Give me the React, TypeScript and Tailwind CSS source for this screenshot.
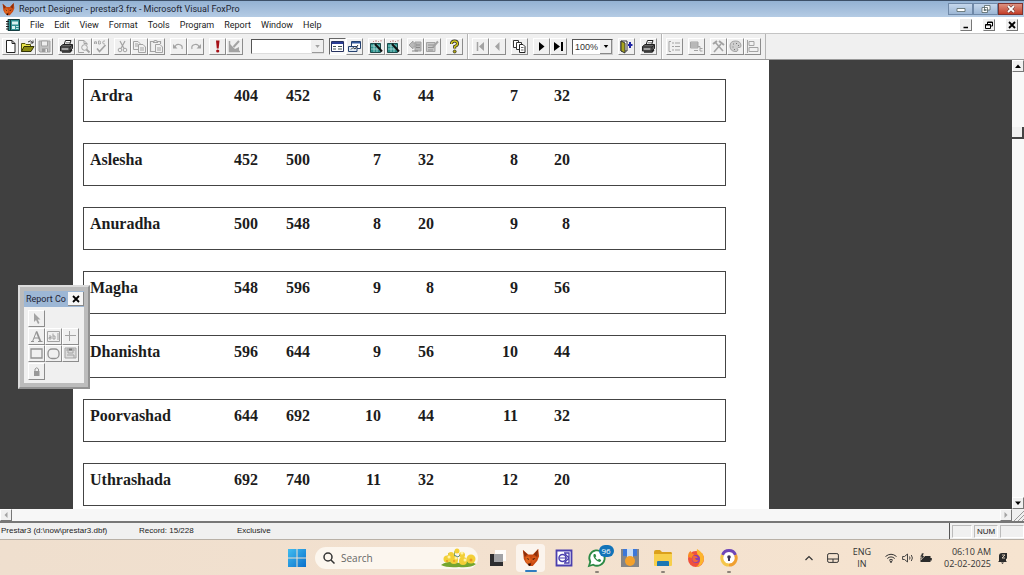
import type { ReactNode } from "react";

interface Star {
  name: string;
  values: number[];
}

interface ToolProps {
  label: string;
  children: ReactNode;
  pressed?: boolean;
}

const stars: Star[] = [
  { name: "Ardra", values: [404, 452, 6, 44, 7, 32] },
  { name: "Aslesha", values: [452, 500, 7, 32, 8, 20] },
  { name: "Anuradha", values: [500, 548, 8, 20, 9, 8] },
  { name: "Magha", values: [548, 596, 9, 8, 9, 56] },
  { name: "Dhanishta", values: [596, 644, 9, 56, 10, 44] },
  { name: "Poorvashad", values: [644, 692, 10, 44, 11, 32] },
  { name: "Uthrashada", values: [692, 740, 11, 32, 12, 20] },
];

const menus = ["File", "Edit", "View", "Format", "Tools", "Program", "Report", "Window", "Help"];

const GRAY = "#a3a3a3";

function Icon({ children }: { children: ReactNode }) {
  return (
    <svg viewBox="0 0 15 15" className="size-[15px]" fill="none" aria-hidden="true">
      {children}
    </svg>
  );
}

function Tool({ label, children, pressed }: ToolProps) {
  return (
    <button
      aria-label={label}
      className={
        pressed
          ? "size-[17px] border border-t-[#666] border-l-[#666] border-r-white border-b-white bg-[#f8f8f8]"
          : "size-[17px] border border-t-white border-l-white border-r-[#8c8c8c] border-b-[#8c8c8c] bg-[#f0f0f0]"
      }
    >
      <Icon>{children}</Icon>
    </button>
  );
}

function Group({ children }: { children: ReactNode }) {
  return <div className="flex">{children}</div>;
}

function FoxHead({ className }: { className: string }) {
  return (
    <svg viewBox="0 0 20 20" className={className} aria-hidden="true">
      <path d="M1 1 L7 6 L12 6 L18 0 L19 8 L17 13 L12 19 L8 19 L4 15 L2 11 Z" fill="#c94a12" />
      <path d="M1 1 L6 6 L3 9 Z M18 0 L13 6 L17 9 Z" fill="#8a300d" />
      <path d="M4 9 L8 8 L10 12 L8 18 L4 14 Z" fill="#e0661e" />
      <path d="M12 8 L16 9 L15 13 L12 16 L10 12 Z" fill="#d9581a" />
      <path d="M5 10 L8 11 L7 12 Z M11 11 L15 10 L13 12 Z" fill="#2b0d04" />
      <path d="M7 16 L10 16 L9 19 L7 18 Z" fill="#1c0a05" />
    </svg>
  );
}

function Printer() {
  return (
    <>
      <path d="M5 6 L6.500 1.500 H12 L10.500 6" fill="#fff" stroke="#222" />
      <path d="M7 3.500 H11 M6.500 5 H10.500" stroke="#555" strokeWidth=".6" />
      <path d="M1.500 7.500 L4 5.500 H13.500 V9.500 L11 12 H1.500 Z" fill="#666" stroke="#222" />
      <path d="M1.500 8 H11 L13.500 6 M11 8 V12" stroke="#222" />
      <path d="M3 10 H9" stroke="#ddd" />
      <path d="M3 13 H11 L13 11" stroke="#222" strokeWidth="1.300" />
    </>
  );
}

function Wizard() {
  return (
    <>
      <path d="M1.500 4.500 H11.500 V13.500 H1.500 Z" fill="#2b8f8b" stroke="#1d4a4a" />
      <path d="M2 7 H11 M2 10 H11 M5 5 V13 M8 5 V13" stroke="#c9e6e4" strokeWidth=".7" />
      <path d="M6 5 L13 12.500" stroke="#111" strokeWidth="2" />
      <path d="M7 1 V3 M10 2 L9 3 M12 1 V2.500 M4 2 L5 3" stroke="#b77" strokeWidth=".9" />
    </>
  );
}

function StandardToolbar() {
  return (
    <div className="flex items-center gap-[5px] border-r border-[#b5b5b5] pr-1 pl-[2px]">
      <Group>
        <Tool label="New">
          <path d="M3.500 1.500 H9 L12 4.500 V13.500 H3.500 Z" fill="#fff" stroke="#222" />
          <path d="M9 1.500 V4.500 H12" stroke="#222" />
        </Tool>
        <Tool label="Open">
          <path d="M1.500 12.500 V4.500 H5 L6 5.500 H10.500 V7.500" fill="#e9e64c" stroke="#55550a" />
          <path d="M1.500 12.500 L4 7.500 H14 L11 12.500 Z" fill="#8b8b12" stroke="#333307" />
          <path d="M8 3 Q10.500 .5 12.500 3.500 M13 1.500 V4 H10.500" stroke="#222" strokeWidth=".9" />
        </Tool>
        <Tool label="Save">
          <path d="M2 2 H13 V13 H3 L2 12 Z" fill="#c2c2c2" stroke={GRAY} />
          <path d="M4.500 2 H10.500 V7 H4.500 Z" fill="#eee" stroke={GRAY} />
          <path d="M5 9.500 H11 V13 H5 Z" fill="#999" />
          <path d="M8.500 10 H10 V13 H8.500 Z" fill="#eee" />
        </Tool>
      </Group>
      <Group>
        <Tool label="Print"><Printer /></Tool>
        <Tool label="Print Preview">
          <path d="M2.500 1.500 H8 L11 4.500 V6 M2.500 1.500 V13.500 H8 M8 1.500 V4.500 H11" stroke={GRAY} />
          <circle cx="8.500" cy="8.500" r="2.800" stroke={GRAY} />
          <path d="M10.500 10.500 L13.500 13.500" stroke={GRAY} strokeWidth="1.800" />
        </Tool>
        <Tool label="Spelling">
          <path d="M1.500 5 V3 L2.500 2 L3.500 3 V5 M1.500 4 H3.500 M5.500 2 V5 H7 L8 4.200 L7 3.500 L7.500 2.500 L6.500 2 H5.500 M12 2 H10.500 L9.800 3 V4 L10.500 5 H12" stroke={GRAY} strokeWidth=".9" />
          <path d="M4 9.500 L6.500 12.500 L12.500 6" stroke={GRAY} strokeWidth="1.600" />
        </Tool>
      </Group>
      <Group>
        <Tool label="Cut">
          <path d="M5 2 L9 9.500 M10 2 L6 9.500" stroke={GRAY} strokeWidth="1.200" />
          <circle cx="5" cy="11" r="1.800" stroke={GRAY} />
          <circle cx="10" cy="11" r="1.800" stroke={GRAY} />
        </Tool>
        <Tool label="Copy">
          <path d="M1.500 2.500 H6 L8 4.500 V10.500 H1.500 Z M3 5 H6 M3 7 H6" stroke={GRAY} />
          <path d="M6.500 5.500 H11 L13.500 8 V13.500 H6.500 Z" fill="#f0f0f0" stroke={GRAY} />
          <path d="M8 9 H12 M8 11 H12" stroke={GRAY} />
        </Tool>
        <Tool label="Paste">
          <path d="M5 2.500 H1.500 V12.500 H6 M9 2.500 H11.500 V5 M4.500 3.500 V2.500 L6 1.500 H7 L8.500 2.500 V3.500 Z" stroke={GRAY} strokeWidth="1.200" />
          <path d="M6.500 5.500 H11 L13.500 8 V13.500 H6.500 Z" fill="#f0f0f0" stroke={GRAY} />
          <path d="M8 9 H12 M8 11 H12" stroke={GRAY} />
        </Tool>
      </Group>
      <Group>
        <Tool label="Undo">
          <path d="M4 9 Q4 5 8 5.500 Q12 6 11 10" stroke={GRAY} strokeWidth="1.200" />
          <path d="M2 5 V9.500 H6.500 Z" fill={GRAY} />
        </Tool>
        <Tool label="Redo">
          <path d="M11 9 Q11 5 7 5.500 Q3 6 4 10" stroke={GRAY} strokeWidth="1.200" />
          <path d="M13 5 V9.500 H8.500 Z" fill={GRAY} />
        </Tool>
      </Group>
      <Group>
        <Tool label="Run">
          <path d="M6 1.500 H9.500 L8.700 9.500 H6.800 Z" fill="#a50f16" />
          <circle cx="7.700" cy="12" r="1.600" fill="#a50f16" />
        </Tool>
        <Tool label="Modify Form">
          <path d="M2.500 2 V12.500 H13" stroke={GRAY} strokeWidth="1.500" />
          <path d="M3 12 V5 L8 10 L12 8 V12 Z" fill={GRAY} />
          <path d="M6.500 8 L12 2" stroke={GRAY} strokeWidth="2" />
        </Tool>
      </Group>
      <select
        aria-label="Database"
        disabled
        className="ml-[3px] h-[15px] w-[73px] appearance-none border border-t-[#555] border-l-[#555] border-r-[#ddd] border-b-[#ddd] bg-white bg-[linear-gradient(#f0f0f0,#f0f0f0)] bg-[length:12px_13px] bg-right bg-no-repeat"
      />
      <span className="pointer-events-none -ml-[17px] flex h-[13px] w-3 items-center justify-center border-r border-b border-[#999]">
        <svg viewBox="0 0 6 4" className="h-[3px] w-[5px]" aria-hidden="true"><path d="M0 0 H6 L3 4 Z" fill={GRAY} /></svg>
      </span>
      <Group>
        <Tool label="Form" pressed>
          <path d="M1.500 2.500 H13.500 V12.500 H1.500 Z" fill="#fff" stroke="#24305f" />
          <path d="M2 3 H13 V5 H2 Z" fill="#2b3e95" />
          <path d="M3 7.500 H6 M3 10 H6 M8 7.500 H12 M8 10 H12" stroke="#455" />
        </Tool>
        <Tool label="View Window">
          <path d="M4.500 2.500 H13.500 V9.500 H4.500 Z" fill="#fff" stroke="#24406f" />
          <path d="M5 3 H13 V4.500 H5 Z" fill="#355ba0" />
          <path d="M1.500 7.500 H10 V12.500 H1.500 Z" fill="#dfeaf5" stroke="#24406f" />
          <path d="M4 10.500 L6 8.500 L8 10 L11 6" stroke="#333" />
        </Tool>
      </Group>
      <Group>
        <Tool label="Form Wizard"><Wizard /></Tool>
        <Tool label="Report Wizard"><Wizard /></Tool>
      </Group>
      <Group>
        <Tool label="AutoForm">
          <path d="M7 3 H13 V12 H7 Z M1 6 L5 2 V4 H8 V8 H5 V10 Z" fill="#b8b8b8" stroke={GRAY} />
          <path d="M8 6 H12 M8 8.500 H12 M4 12 H10" stroke="#888" />
        </Tool>
        <Tool label="AutoReport">
          <path d="M1.500 3.500 H10 V12.500 H1.500 Z" fill="#c8c8c8" stroke={GRAY} />
          <path d="M3 6 H9 M3 8.500 H9 M3 11 H8" stroke="#929292" />
          <path d="M8 8 L13 2.500" stroke={GRAY} strokeWidth="2" />
        </Tool>
      </Group>
      <Tool label="Help">
        <path d="M4.500 5 Q4.500 2 7.500 2 Q10.500 2 10.500 4.800 Q10.500 6.500 7.700 7.500 V9.500" stroke="#222" strokeWidth="3" />
        <path d="M4.500 5 Q4.500 2 7.500 2 Q10.500 2 10.500 4.800 Q10.500 6.500 7.700 7.500 V9.500" stroke="#cfc51f" strokeWidth="1.500" />
        <circle cx="7.700" cy="12.500" r="1.500" fill="#b5a90e" stroke="#222" strokeWidth=".7" />
      </Tool>
    </div>
  );
}

function PreviewToolbar() {
  return (
    <div className="flex items-center gap-[5px] border-r border-l border-l-white border-r-[#b5b5b5] pr-1 pl-[3px]">
      <Group>
        <Tool label="First Page">
          <path d="M4.500 3 V12" stroke={GRAY} strokeWidth="1.500" />
          <path d="M11 3 V12 L6 7.500 Z" fill={GRAY} />
        </Tool>
        <Tool label="Previous Page"><path d="M9.500 3 V12 L5 7.500 Z" fill={GRAY} /></Tool>
      </Group>
      <Tool label="Go to Page">
        <path d="M1.500 1.500 H6.500 V8.500 H1.500 Z" fill="#fff" stroke="#333" />
        <path d="M4.500 3.500 H9.500 V10.500 H4.500 Z" fill="#fff" stroke="#333" />
        <path d="M7.500 5.500 H11 L13 7.500 V13.500 H7.500 Z" fill="#fff" stroke="#222" />
        <path d="M9 8.500 H11.500 M9 11 H11.500" stroke="#666" />
      </Tool>
      <Group>
        <Tool label="Next Page"><path d="M5 3 V12 L10.500 7.500 Z" fill="#000" /></Tool>
        <Tool label="Last Page">
          <path d="M3 3 V12 L9 7.500 Z" fill="#000" />
          <path d="M11 3 V12" stroke="#000" strokeWidth="2" />
        </Tool>
      </Group>
      <div className="flex h-4 w-[41px] items-center border border-t-[#555] border-l-[#555] border-r-[#ccc] border-b-[#ccc] bg-white">
        <select aria-label="Zoom" className="w-[27px] appearance-none pl-[2px] text-[9px] leading-3 text-[#333]">
          <option>100%</option>
        </select>
        <span className="pointer-events-none flex h-[14px] w-3 items-center justify-center border-r border-b border-[#888] bg-[#f0f0f0]">
          <svg viewBox="0 0 6 4" className="h-[3px] w-[6px]" aria-hidden="true"><path d="M0 0 H6 L3 4 Z" /></svg>
        </span>
      </div>
      <Tool label="Close Preview">
        <path d="M2 2 H8 V12 H2 Z" fill="#fff" stroke="#333" />
        <path d="M2 2 L6 4 V14 L2 12 Z" fill="#a8a51c" stroke="#333" />
        <path d="M13.500 6 H9 M11 3 V9" stroke="#2026a5" strokeWidth="2" />
      </Tool>
      <Tool label="Print Report"><Printer /></Tool>
    </div>
  );
}

function DesignerToolbar() {
  return (
    <div className="flex items-center gap-[5px] border-r border-l border-l-white border-r-[#b5b5b5] pr-1 pl-[3px]">
      <Tool label="Data Grouping">
        <path d="M4 2.500 H2 V12.500 H4 M5 4 H7 M5 7.500 H7 M5 11 H7 M8 4 H13 M8 7.500 H13 M8 11 H13" stroke={GRAY} />
      </Tool>
      <Tool label="Data Environment">
        <path d="M1.500 3 H9 V9 H1.500 Z" fill="#ccc" stroke={GRAY} />
        <path d="M2 5 H9 M2 7 H9 M9 7.500 H11 V12 H13.500 M5 11.500 H9 M11 9.500 H13.500" stroke={GRAY} />
      </Tool>
      <Group>
        <Tool label="Report Controls">
          <path d="M3 13 L10 5 M4 3 L12 12" stroke={GRAY} strokeWidth="1.600" />
          <path d="M8 2 L13 6 M2 5 L6 2" stroke={GRAY} strokeWidth="2" />
        </Tool>
        <Tool label="Color Palette">
          <path d="M7.500 2 Q13 2 13 7 Q13 9 10 8.500 Q8.500 9 10 11 Q9.500 13 7 12.500 Q2 12 2 7 Q2 2 7.500 2 Z" fill="#cfcfcf" stroke={GRAY} />
          <path d="M5 5 H6 M8 4.500 H9 M4.500 8 H5.500 M10 6.500 H11 M6 10.500 H7" stroke="#777" />
        </Tool>
        <Tool label="Layout">
          <path d="M2.500 1 V14" stroke={GRAY} />
          <path d="M4 2.500 H9 V6.500 H4 Z M4 8.500 H13 V12.500 H4 Z" stroke={GRAY} />
        </Tool>
      </Group>
    </div>
  );
}

function TitleBar() {
  const glass = "flex h-3 w-[25px] items-center justify-center border border-[#7089a8] bg-linear-to-b from-[#c5d7ec] to-[#9db7d5]";
  return (
    <header className="flex h-[17px] shrink-0 items-center border-t border-[#3d5068] bg-linear-to-b from-[#94b2d3] to-[#b4cbe4] pl-[2px] font-['Roboto',sans-serif]">
      <FoxHead className="size-[13px]" />
      <h1 className="ml-1 text-[9px] leading-3 text-[#1b2532]">Report Designer - prestar3.frx - Microsoft Visual FoxPro</h1>
      <div className="ml-auto flex pr-px">
        <button aria-label="Minimize" className={glass}>
          <svg viewBox="0 0 10 8" className="h-2 w-[10px]"><path d="M1 3.500 H9 V6.500 H1 Z" fill="#fff" stroke="#566" strokeWidth=".8" /></svg>
        </button>
        <button aria-label="Restore" className={glass}>
          <svg viewBox="0 0 10 8" className="h-2 w-[10px]"><path d="M3.500 .5 H9 V5 H3.500 Z M1 2.500 H6.500 V7.500 H1 Z M3 4.500 H4.500 V5.500 H3 Z" fill="#fff" stroke="#566" strokeWidth=".8" /></svg>
        </button>
        <button aria-label="Close" className="flex h-3 w-[25px] items-center justify-center border border-[#7d3330] bg-linear-to-b from-[#dd9180] to-[#c23c28]">
          <svg viewBox="0 0 10 8" className="h-2 w-[10px]"><path d="M2 1 L8 7 M8 1 L2 7" stroke="#5c3836" strokeWidth="3" /><path d="M2 1 L8 7 M8 1 L2 7" stroke="#fff" strokeWidth="1.800" /></svg>
        </button>
      </div>
    </header>
  );
}

function MenuBar() {
  const mdi = "flex size-3 items-center justify-center border border-t-[#eee] border-l-[#eee] border-r-[#777] border-b-[#777] bg-[#f0f0f0]";
  return (
    <nav className="flex h-4 shrink-0 items-center bg-white pl-[6px] font-['Roboto',sans-serif]">
      <svg viewBox="0 0 14 12" className="h-3 w-[14px]" aria-hidden="true">
        <path d="M2 .5 H13.500 V11.500 H2 Z" fill="#2e8f92" stroke="#123c40" />
        <path d="M4.500 1 V11" stroke="#123c40" />
        <path d="M6 2.500 H12 V5.500 H6 Z M6 7 H9 V10 H6 Z" fill="#d9f1f2" />
        <path d="M0 2.500 H3 M0 5 H3 M0 7.500 H3 M0 10 H3" stroke="#222" />
        <path d="M10 7.500 H12.500 M10 9.500 H12.500" stroke="#c8e9ea" />
      </svg>
      <ul className="ml-[10px] flex gap-[10px]">
        {menus.map((item) => (
          <li key={item}>
            <button className="block text-[9px] leading-3 text-[#222]">{item}</button>
          </li>
        ))}
      </ul>
      <div className="ml-auto flex gap-[11px] pr-[6px]">
        <button aria-label="Minimize report" className={mdi}>
          <svg viewBox="0 0 8 8" className="size-2"><path d="M1.500 6.500 H6" stroke="#000" strokeWidth="1.500" /></svg>
        </button>
        <button aria-label="Restore report" className={mdi}>
          <svg viewBox="0 0 8 8" className="size-2" fill="none"><path d="M2.500 3 V1 H7.500 V5 H6 M2.500 1.500 H7.500 M.5 3.500 H5.500 V7.500 H.5 Z M.5 4 H5.500" stroke="#000" /></svg>
        </button>
        <button aria-label="Close report" className={mdi}>
          <svg viewBox="0 0 8 8" className="size-2"><path d="M1 1 L7 7 M7 1 L1 7" stroke="#000" strokeWidth="1.800" /></svg>
        </button>
      </div>
    </nav>
  );
}

function ReportPage() {
  return (
    <main className="ml-[73px] w-[696px] shrink-0 overflow-hidden bg-white pl-[10px]">
      {/* every record is a ruled box, so the cells carry the outline */}
      <table className="-mt-[2px] w-[643px] table-fixed border-separate border-spacing-x-0 border-spacing-y-[21px] font-['Liberation_Serif',serif] text-[16px] font-bold text-[#1c1c1c]">
        <colgroup>
          <col className="w-[117px]" />
          <col className="w-[58px]" />
          <col className="w-[52px]" />
          <col className="w-[71px]" />
          <col className="w-[53px]" />
          <col className="w-[84px]" />
          <col className="w-[52px]" />
          <col />
        </colgroup>
        <tbody>
          {stars.map((star) => (
            <tr key={star.name} className="h-[43px]">
              <th scope="row" className="border-y border-l border-[#444] pt-2 pl-[6px] text-left align-top leading-4">{star.name}</th>
              {star.values.map((value, i) => (
                <td key={i} className="border-y border-[#444] p-0 pt-2 text-right align-top leading-4">{value}</td>
              ))}
              <td className="border-y border-r border-[#444] p-0" />
            </tr>
          ))}
        </tbody>
      </table>
    </main>
  );
}

function ReportControls() {
  return (
    <section className="absolute top-[225px] left-[18px] w-[72px] border-2 border-t-[#dcdcdc] border-l-[#dcdcdc] border-r-[#929292] border-b-[#929292] bg-[#bcbcbc] p-1 font-['Roboto',sans-serif]">
      <div className="flex h-4 items-center bg-[#9db7d5] pl-[2px]">
        <h2 className="text-[9px] leading-3 whitespace-nowrap text-[#223]">Report Co</h2>
        <button aria-label="Close controls" className="ml-auto flex h-[14px] w-4 items-center justify-center border-r border-b border-[#888] bg-[#f6f6f6]">
          <svg viewBox="0 0 8 8" className="size-2"><path d="M1 1 L7 7 M7 1 L1 7" stroke="#000" strokeWidth="1.800" /></svg>
        </button>
      </div>
      <div className="flex flex-col gap-px bg-[#f0f0f0] px-1 py-[3px]">
        <Tool label="Select Objects"><path d="M5 2 V11 L7 9 L9 13 L10.500 12 L8.700 8.500 H11.500 Z" fill={GRAY} /></Tool>
        <div className="flex flex-wrap">
          <Tool label="Label">
            <path d="M2 12.500 H5 M9 12.500 H13.500 M3.500 12.500 L7.500 2.500 M5 9 H10" stroke="#929292" />
            <path d="M7.500 2.500 L11.500 12.500" stroke="#929292" strokeWidth="1.800" />
          </Tool>
          <Tool label="Field">
            <path d="M1.500 2.500 H13.500 V12.500 H1.500 Z M12 4 V11" stroke={GRAY} />
            <path d="M3 7 H5 V10 H3 V8.500 H5 M7 4.500 V10 H9 V7 H7" stroke={GRAY} />
          </Tool>
          <Tool label="Line"><path d="M2 6.500 H13 M6.500 2 V12" stroke={GRAY} /></Tool>
          <Tool label="Rectangle"><path d="M2 3 H13 V12 H2 Z" stroke="#929292" strokeWidth="1.300" /></Tool>
          <Tool label="Rounded Rectangle"><rect x="2" y="3" width="11" height="9.500" rx="4" stroke="#929292" strokeWidth="1.300" /></Tool>
          <Tool label="Picture">
            <path d="M2 2 H13 V12 H2 Z" fill="#ddd" stroke={GRAY} />
            <path d="M3 4 H12 M5 2 V7 H10 V2 M4 9 H11 V12" stroke={GRAY} />
            <path d="M6 3.500 H9" stroke="#777" strokeWidth="2" />
          </Tool>
        </div>
        <Tool label="Button Lock">
          <path d="M5 7 H10.500 V12 H5 Z" fill="#999" />
          <path d="M6 7 V5 Q7.700 2.500 9.500 5 V7" stroke="#999" />
        </Tool>
      </div>
    </section>
  );
}

function ScrollArrow({ label, d, disabled }: { label: string; d: string; disabled?: boolean }) {
  return (
    <button aria-label={label} disabled={disabled} className="flex size-3 shrink-0 items-center justify-center border border-t-white border-l-white border-r-[#777] border-b-[#777] bg-[#f0f0f0]">
      <svg viewBox="0 0 6 6" className="size-[6px]"><path d={d} fill={disabled ? GRAY : "#000"} /></svg>
    </button>
  );
}

function StatusBar() {
  return (
    <footer className="flex h-[19px] shrink-0 items-center border-t-2 border-b border-t-[#777] border-b-[#b8b0a6] bg-[#f0f0f0] text-[8px] leading-3 text-[#222]">
      <p className="w-[139px] pl-px">Prestar3 (d:\now\prestar3.dbf)</p>
      <p className="w-[98px]">Record: 15/228</p>
      <p>Exclusive</p>
      <div className="ml-auto flex h-full items-center gap-[2px] border-l border-[#555] pl-[2px]">
        <span className="h-[13px] w-5 border border-t-[#bbb] border-l-[#bbb] border-r-white border-b-white" />
        <span className="h-[13px] w-6 border border-t-[#bbb] border-l-[#bbb] border-r-white border-b-white text-center">NUM</span>
        <span className="h-[13px] w-6 border border-t-[#bbb] border-l-[#bbb] border-r-white border-b-white" />
      </div>
    </footer>
  );
}

function AppButton({ label, children, active, running }: { label: string; children: ReactNode; active?: boolean; running?: boolean }) {
  return (
    <button aria-label={label} className="relative flex h-8 w-[33px] items-center justify-center">
      {active && <span className="absolute inset-x-[2px] inset-y-[2px] rounded-sm bg-[#fbf4ed]" />}
      <span className="relative">{children}</span>
      {active && <span className="absolute bottom-[2px] h-[2px] w-3 rounded-full bg-[#2f7cc0]" />}
      {running && <span className="absolute bottom-px h-[2px] w-1 rounded-full bg-[#8c8279]" />}
    </button>
  );
}

function Taskbar() {
  return (
    <div className="grid h-[35px] shrink-0 grid-cols-[1fr_auto_1fr] items-center bg-linear-to-r from-[#efdfce] via-[#f3e1cf] to-[#f6e4d0] font-['Open_Sans',sans-serif] text-[#333]">
      <div />
      <div className="flex items-center">
        <button aria-label="Start" className="flex w-9 justify-center">
          <svg viewBox="0 0 18 18" className="size-[18px]">
            <defs>
              <linearGradient id="win" x1="0" y1="0" x2="1" y2="1">
                <stop offset="0" stopColor="#41bdf0" />
                <stop offset="1" stopColor="#0a6fcb" />
              </linearGradient>
            </defs>
            <path d="M0 0 H8.500 V8.500 H0 Z M9.500 0 H18 V8.500 H9.500 Z M0 9.500 H8.500 V18 H0 Z M9.500 9.500 H18 V18 H9.500 Z" fill="url(#win)" />
          </svg>
        </button>
        <label className="mr-[3px] flex h-[22px] w-[163px] items-center rounded-full bg-[#fcf6ee] pl-2">
          <svg viewBox="0 0 12 12" className="size-3 shrink-0" fill="none"><circle cx="5" cy="5" r="4" stroke="#333" strokeWidth="1.500" /><path d="M8 8 L11.500 11.500" stroke="#333" strokeWidth="1.500" /></svg>
          <input aria-label="Search" placeholder="Search" className="ml-[6px] w-[86px] min-w-0 text-[10px] leading-4 placeholder:text-[#666] focus:outline-none" />
          <svg viewBox="0 0 36 20" className="ml-[14px] h-5 w-9 shrink-0">
            <path d="M0 17 Q8 11 18 15 Q28 11 35 16 Q30 20 18 19 Q6 20 0 17 Z" fill="#74a52f" />
            <path d="M5 14 L8 5 M12 15 L14 3 M21 15 L23 6" stroke="#8dad3a" />
            <g fill="#f3cf37">
              <circle cx="6" cy="11" r="3.500" /><circle cx="10" cy="7" r="3" /><circle cx="13" cy="12" r="4" />
              <circle cx="16" cy="3" r="2.500" /><circle cx="21" cy="7" r="3" /><circle cx="22" cy="13" r="4" /><circle cx="30" cy="11" r="4.500" />
            </g>
            <g fill="#fff2a0">
              <circle cx="8" cy="9" r="1.500" /><circle cx="15" cy="10" r="1.500" /><circle cx="21" cy="5" r="1.500" /><circle cx="24" cy="12" r="1.500" />
            </g>
            <g fill="#e89a20">
              <circle cx="6" cy="13" r="1" /><circle cx="13" cy="13" r="1" /><circle cx="30" cy="12" r="1.500" />
            </g>
            <path d="M13 7 L17 9 L19 7" stroke="#588" fill="none" />
          </svg>
        </label>
        <AppButton label="Task View">
          <svg viewBox="0 0 18 18" className="size-[18px]">
            <path d="M6 1 H17 V12 H6 Z" fill="#fffdfa" />
            <path d="M1 5 H5 V13 H14 V17 H1 Z" fill="#2d2d2f" />
            <path d="M5 5 H14 V13 H5 Z" fill="#a2a3a6" />
          </svg>
        </AppButton>
        <AppButton label="Visual FoxPro" active><FoxHead className="size-[18px]" /></AppButton>
        <AppButton label="Astrology">
          <svg viewBox="0 0 18 18" className="size-[18px]" fill="none" stroke="#4a3fae">
            <path d="M1.500 1.500 H16.500 V16.500 H1.500 Z" fill="#fff" strokeWidth="1.800" />
            <path d="M9 4 H14 V14 H9 M14 9 L10 5 M14 9 L10 13" strokeWidth="1.300" />
            <circle cx="7.500" cy="9" r="3.500" strokeWidth="1.500" />
            <path d="M5 9 H12" />
          </svg>
        </AppButton>
        <AppButton label="WhatsApp" running>
          <svg viewBox="0 0 20 20" className="size-5">
            <path d="M2 18 L3.300 13.800 A7.700 7.700 0 1 1 6.200 16.700 Z" fill="#fff" stroke="#2c8a45" strokeWidth="1.800" />
            <path d="M7 6 Q5.500 7.500 7.500 10.500 Q10 13.700 12.500 14 Q14.500 13.500 14.200 12 L12 10.800 L10.800 12 Q9 11 8.300 9.300 L9.300 8.200 L8.300 6 Z" fill="#2c8a45" />
          </svg>
          <span className="absolute -top-[3px] left-3 flex h-3 w-[15px] items-center justify-center rounded-full bg-[#1273b8] text-[8px] leading-3 text-white">96</span>
        </AppButton>
        <AppButton label="Downloads">
          <svg viewBox="0 0 18 18" className="size-[18px]">
            <path d="M0 0 H18 V18 H0 Z" fill="#858587" />
            <path d="M2 0 H6 V7 H2 Z M12 0 H16 V7 H12 Z" fill="#3c77d9" />
            <path d="M6 0 H12 V8 H6 Z" fill="#c9ddf5" />
            <circle cx="9" cy="12" r="5" fill="#f5a12b" />
          </svg>
        </AppButton>
        <AppButton label="File Explorer" running>
          <svg viewBox="0 0 20 18" className="h-[18px] w-5">
            <path d="M1 3 Q1 1 3 1 H7 L9 3 H18 Q19 3 19 5 V14 H1 Z" fill="#dba11d" />
            <path d="M1 5 H19 V16 Q19 17 18 17 H2 Q1 17 1 16 Z" fill="#f7cf4b" />
            <path d="M4 17 V13 Q4 12 5 12 H15 Q16 12 16 13 V17 Z" fill="#1b76b4" />
          </svg>
        </AppButton>
        <AppButton label="Firefox">
          <svg viewBox="0 0 18 18" className="size-[18px]">
            <circle cx="9" cy="10" r="8" fill="#f0503c" />
            <path d="M10 0 Q17 4 17 10 Q16 17 9 18 Q15 14 12 7 Q9 5 10 0 Z" fill="#fdb52c" />
            <path d="M1 8 Q1 3 4 2 Q4 5 7 5 L5 9 Z" fill="#f98a24" />
            <circle cx="9" cy="10" r="4" fill="#8a3fb2" />
            <path d="M6 7 Q9 6 11 9 L8 9 Q9 12 12 11 Q10 14 7 13 Q4 11 6 7 Z" fill="#f2653a" />
          </svg>
        </AppButton>
        <AppButton label="Secure Browser" running>
          <svg viewBox="0 0 18 18" className="size-[18px]" fill="none">
            <circle cx="9" cy="9" r="6" fill="#fff" />
            <path d="M2.500 6 A7 7 0 0 1 15.500 6" stroke="#6e45b8" strokeWidth="3" />
            <path d="M15.500 6 A7 7 0 0 1 9 16" stroke="#f0a030" strokeWidth="3" />
            <path d="M9 16 A7 7 0 0 1 2.500 6" stroke="#f5c64a" strokeWidth="3" />
            <circle cx="9" cy="8" r="1.800" fill="#3b3357" />
            <path d="M8 8 H10 V12 H8 Z" fill="#3b3357" />
          </svg>
        </AppButton>
      </div>
      <div className="flex items-center justify-end pr-4">
        <button aria-label="Show hidden icons" className="mr-[14px]">
          <svg viewBox="0 0 8 6" className="h-[6px] w-2" fill="none"><path d="M.5 5 L4 1.500 L7.500 5" stroke="#333" strokeWidth="1.200" /></svg>
        </button>
        <svg viewBox="0 0 12 10" className="mr-[14px] h-[10px] w-3" fill="none"><rect x=".6" y=".6" width="10.800" height="8.800" rx="1.500" stroke="#333" /><path d="M1 6 H11 M6 6 V9" stroke="#333" /></svg>
        <p className="mr-[14px] text-center text-[9px] leading-3">ENG<br />IN</p>
        <svg viewBox="0 0 12 10" className="mr-[5px] h-[10px] w-3" fill="none" stroke="#333"><path d="M.5 3.500 Q6 -1 11.500 3.500 M2.300 5.500 Q6 2.300 9.700 5.500 M4 7.300 Q6 5.500 8 7.300" /><circle cx="6" cy="8.700" r=".7" fill="#333" /></svg>
        <svg viewBox="0 0 12 10" className="mr-[5px] h-[10px] w-3" fill="none" stroke="#333"><path d="M.6 3.500 H2.500 L5.500 1 V9 L2.500 6.500 H.6 Z M7.500 3.500 Q8.500 5 7.500 6.500 M9.300 2 Q11.500 5 9.300 8" strokeWidth=".9" /></svg>
        <svg viewBox="0 0 13 10" className="mr-3 h-[10px] w-[13px]"><path d="M2 3 H11.500 V9 H1.500 V5 Z M11.500 5 H12.800 V7.500 H11.500 Z" fill="#2b2b2b" /><path d="M3 0 L1 4 H3 L2 7 L6 3 H4 L5 0 Z" fill="#2b2b2b" stroke="#f5e3cf" strokeWidth=".5" /></svg>
        <p className="mr-[6px] text-right text-[9px] leading-3">06:10 AM<br />02-02-2025</p>
        <svg viewBox="0 0 11 12" className="h-3 w-[11px]"><path d="M2 9 V4 Q2 1 5 1 H10 V6 Q10 7 9 7 V9 L10 10 H1 Z M4 10.500 H7 L5.500 12 Z" fill="#2b2b2b" /><path d="M5 3 H8 L5 6 H8" stroke="#f5e3cf" strokeWidth=".8" fill="none" /></svg>
      </div>
    </div>
  );
}

export default function App() {
  return (
    <div className="flex h-screen flex-col overflow-hidden bg-[#f0f0f0] font-['Liberation_Sans',sans-serif]">
      <TitleBar />
      <MenuBar />
      <div className="flex h-[27px] shrink-0 border-t border-b border-t-[#c4c4c4] border-b-[#999]">
        <StandardToolbar />
        <PreviewToolbar />
        <DesignerToolbar />
      </div>
      <div className="relative flex min-h-0 flex-1 bg-[#404040]">
        <ReportPage />
        <div className="ml-auto flex w-3 flex-col bg-[#f8f8f8]">
          <ScrollArrow label="Scroll up" d="M0 5 H6 L3 1.500 Z" />
          <div className="mt-[55px] h-3 border-r-2 border-b-2 border-[#444] bg-[#f0f0f0]" />
          <div className="mt-auto"><ScrollArrow label="Scroll down" d="M0 1.500 H6 L3 5 Z" /></div>
        </div>
        <ReportControls />
      </div>
      <div className="flex h-3 shrink-0 bg-[#f7f7f7]">
        <ScrollArrow label="Scroll left" d="M4.500 0 V6 L1.500 3 Z" disabled />
        <div className="flex-1" />
        <ScrollArrow label="Scroll right" d="M1.500 0 V6 L4.500 3 Z" disabled />
        <svg viewBox="0 0 12 12" className="size-3 bg-[#f0f0f0]" aria-hidden="true"><path d="M2 12 L12 2 M6 12 L12 6 M10 12 L12 10" stroke="#999" /></svg>
      </div>
      <StatusBar />
      <Taskbar />
    </div>
  );
}
